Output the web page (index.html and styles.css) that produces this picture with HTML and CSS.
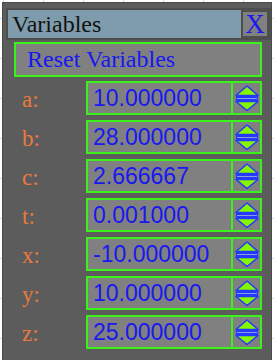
FILE: index.html
```html
<!DOCTYPE html>
<html lang="en">
<head>
    <meta charset="UTF-8">
    <meta name="viewport" content="width=device-width, initial-scale=1.0">
    <title>Variables</title>
    <link rel="stylesheet" href="styles.css">
</head>
<body>

    <svg width="0" height="0" class="defs">
        <symbol id="spin" viewBox="0 0 24 26">
            <polygon points="12,1 23,10.5 1,10.5" fill="#86f500" stroke="#2438ff" stroke-width="1.5" stroke-linejoin="round"/>
            <rect x="1" y="11" width="22" height="5" fill="#2438ff"/>
            <rect x="2" y="13" width="20" height="1" fill="#8c9cd8"/>
            <polygon points="1,16.5 23,16.5 12,25.5" fill="#86f500" stroke="#2438ff" stroke-width="1.5" stroke-linejoin="round"/>
        </symbol>
    </svg>

    <div class="panel">
        <div class="title-bar">
            <span class="title">Variables</span>
            <button class="close-btn">X</button>
        </div>

        <div class="content">
            <button class="reset-btn">Reset Variables</button>

            <div class="var-row">
                <label class="var-label">a:</label>
                <div class="field">
                    <span class="value">10.000000</span>
                    <span class="spinner"><svg><use href="#spin"></use></svg></span>
                </div>
            </div>

            <div class="var-row">
                <label class="var-label">b:</label>
                <div class="field">
                    <span class="value">28.000000</span>
                    <span class="spinner"><svg><use href="#spin"></use></svg></span>
                </div>
            </div>

            <div class="var-row">
                <label class="var-label">c:</label>
                <div class="field">
                    <span class="value">2.666667</span>
                    <span class="spinner"><svg><use href="#spin"></use></svg></span>
                </div>
            </div>

            <div class="var-row">
                <label class="var-label">t:</label>
                <div class="field">
                    <span class="value">0.001000</span>
                    <span class="spinner"><svg><use href="#spin"></use></svg></span>
                </div>
            </div>

            <div class="var-row">
                <label class="var-label">x:</label>
                <div class="field">
                    <span class="value">-10.000000</span>
                    <span class="spinner"><svg><use href="#spin"></use></svg></span>
                </div>
            </div>

            <div class="var-row">
                <label class="var-label">y:</label>
                <div class="field">
                    <span class="value">10.000000</span>
                    <span class="spinner"><svg><use href="#spin"></use></svg></span>
                </div>
            </div>

            <div class="var-row">
                <label class="var-label">z:</label>
                <div class="field">
                    <span class="value">25.000000</span>
                    <span class="spinner"><svg><use href="#spin"></use></svg></span>
                </div>
            </div>
        </div>
    </div>

</body>
</html>
```

FILE: styles.css
```css
/* Page */
body {
    margin: 0;
    height: 100vh;
    overflow: hidden;
    background-color: #ffffff;
    background-image:
        linear-gradient(#c4dcf0 1px, transparent 1px),
        linear-gradient(90deg, #c4dcf0 1px, transparent 1px);
    background-size: 40px 40px;
    background-position: 0 -22px, 3px 0;
}

.defs {
    position: absolute;
}

/* Window */
.panel {
    box-sizing: border-box;
    width: 270px;
    height: calc(100vh - 2px);
    margin: 2px 0 0 2px;
    padding: 5px 0 0 3px;
    background: #5c5c5c;
    border: 1px solid #4a4a4a;
    border-bottom: none;
}

/* Title bar */
.title-bar {
    display: flex;
    justify-content: space-between;
    height: 28px;
    background: #7e9cac;
    border: 2px solid #4e4e4e;
}

.title {
    padding-left: 4px;
    font-family: "Liberation Serif", serif;
    font-size: 24px;
    line-height: 28px;
    color: #111111;
}

.close-btn {
    box-sizing: border-box;
    width: 28px;
    height: 28px;
    padding: 0;
    background: #808080;
    border: 2px solid #4e4e4e;
    font-family: "Liberation Serif", serif;
    font-size: 27px;
    line-height: 24px;
    color: #1818f0;
}

/* Body */
.content {
    display: flex;
    flex-direction: column;
    gap: 5px;
    padding: 2px 9px 0 8px;
}

.reset-btn {
    box-sizing: border-box;
    height: 35px;
    margin-bottom: -1px;
    padding: 0 0 0 11px;
    text-align: left;
    background: #808080;
    border: 2px solid #3cf01c;
    font-family: "Liberation Serif", serif;
    font-size: 24px;
    line-height: 31px;
    color: #1818f0;
}

/* Variable rows */
.var-row {
    display: flex;
    align-items: center;
}

.var-label {
    width: 64px;
    padding: 3px 0 0 8px;
    font-family: "Liberation Serif", serif;
    font-size: 23px;
    color: #ea7a3c;
}

.field {
    flex: 1;
    display: flex;
    height: 30px;
    background: #808080;
    border: 2px solid #3cf01c;
}

.value {
    flex: 1;
    padding-left: 5px;
    font-family: "Liberation Sans", Arial, sans-serif;
    font-size: 23px;
    line-height: 30px;
    color: #1818f0;
}

.spinner {
    width: 27px;
    border-left: 2px solid #3cf01c;
}

.spinner svg {
    display: block;
    width: 24px;
    height: 26px;
    margin: 2px 0 0 2px;
}
```
